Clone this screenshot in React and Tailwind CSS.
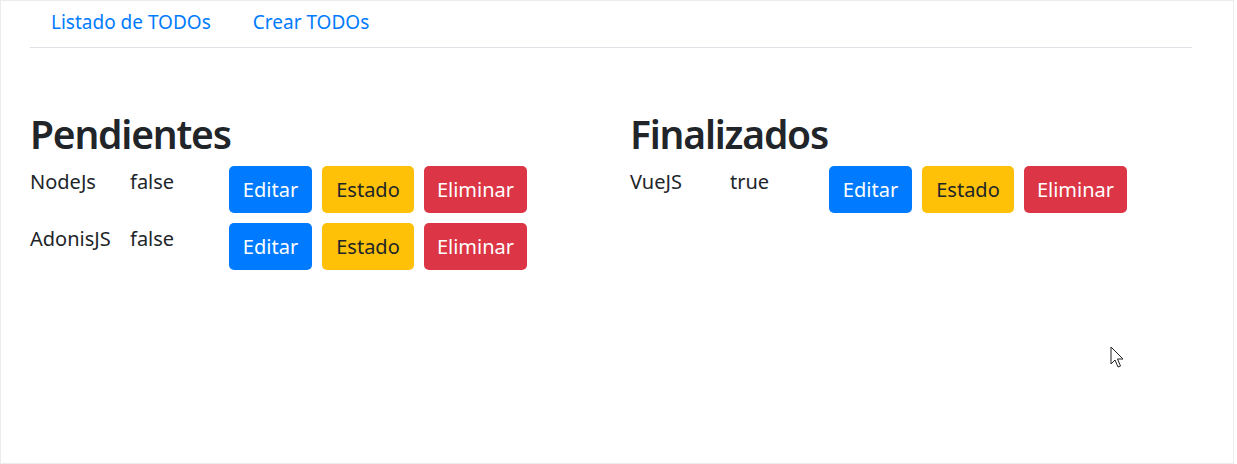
const pendientes = [
  { id: 1, nombre: 'NodeJs', estado: 'false' },
  { id: 2, nombre: 'AdonisJS', estado: 'false' },
];

const finalizados = [{ id: 3, nombre: 'VueJS', estado: 'true' }];

const Fila = ({ todo }) => (
  <div className="flex items-start">
    <span className="w-[100px] pt-px text-[20px] leading-[30px]">{todo.nombre}</span>
    <span className="w-[99px] pt-px text-[20px] leading-[30px]">{todo.estado}</span>
    <div className="flex gap-[10px]">
      <button className="h-[47px] w-[83px] rounded-[5px] bg-[#007bff] text-[20px] text-white">Editar</button>
      <button className="h-[47px] w-[92px] rounded-[5px] bg-[#ffc107] text-[20px] text-[#212529]">Estado</button>
      <button className="h-[47px] w-[103px] rounded-[5px] bg-[#dc3545] text-[20px] text-white">Eliminar</button>
    </div>
  </div>
);

const Lista = ({ titulo, todos }) => (
  <section className="w-[600px]">
    <h1 className="mb-2 text-[39px] font-semibold leading-[48px] tracking-[-1.2px]">{titulo}</h1>
    <div className="flex flex-col gap-[10px]">
      {todos.map((todo) => (
        <Fila key={todo.id} todo={todo} />
      ))}
    </div>
  </section>
);

const Cursor = () => (
  <svg className="absolute left-[1109px] top-[345px]" width="15" height="24" viewBox="0 0 15 24">
    <path d="M1 1 L1 18 L5 14 L8 21 L10.5 20 L7.5 13 L13 13 Z" fill="white" stroke="#222" strokeWidth="1" strokeLinejoin="round" />
  </svg>
);

export default function App() {
  return (
    <div
      className="relative h-[464px] w-[1234px] border border-[#ececec] bg-white pl-[29px] text-[#212529]"
      style={{ fontFamily: '"Noto Sans", "Open Sans", sans-serif' }}
    >
      <nav className="flex h-[47px] w-[1162px] items-center border-b border-[#dee2e6] pb-[4px]">
        <a className="px-[21px] text-[19px] text-[#007bff]">Listado de TODOs</a>
        <a className="px-[21px] text-[19px] text-[#007bff]">Crear TODOs</a>
      </nav>
      <main className="mt-[62px] flex">
        <Lista titulo="Pendientes" todos={pendientes} />
        <Lista titulo="Finalizados" todos={finalizados} />
      </main>
      <Cursor />
    </div>
  );
}
